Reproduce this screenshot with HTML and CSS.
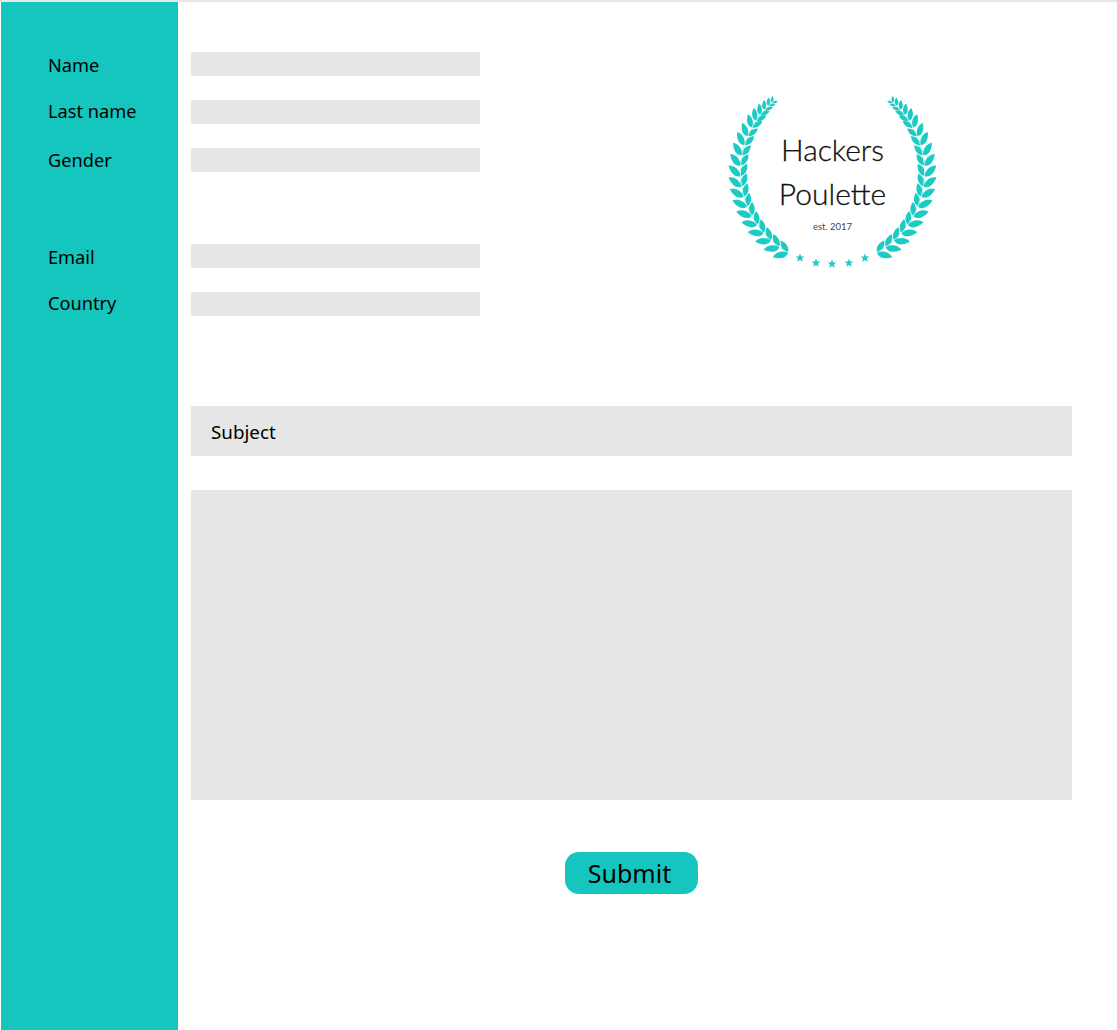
FILE: index.html
```html
<!DOCTYPE html>
<html lang="en">
<head>
<meta charset="utf-8">
<title>Hackers Poulette</title>
<link rel="stylesheet" href="styles.css">
</head>
<body>
<form class="page">
  <aside class="sidebar">
    <label class="side-label side-name" for="name">Name</label>
    <label class="side-label side-last" for="last">Last name</label>
    <label class="side-label side-gender" for="gender">Gender</label>
    <label class="side-label side-email" for="email">Email</label>
    <label class="side-label side-country" for="country">Country</label>
  </aside>
  <main class="content">
    <div class="top-row">
      <div class="fields">
        <input class="field" id="name" type="text">
        <input class="field" id="last" type="text">
        <input class="field" id="gender" type="text">
        <input class="field field-gap" id="email" type="text">
        <input class="field" id="country" type="text">
      </div>
      <svg class="logo" viewBox="0 0 225 195" width="225" height="195" role="img" aria-label="Hackers Poulette logo">
        <defs>
          <g id="pair">
            <path class="leaf" d="M0 0C-2 -5 3 -10 11 -11.5C11 -6 7 -1 0 0Z"/>
            <path class="leaf" d="M0 0C4 -2 10 1 12 7C6 8 1 5 0 0Z"/>
          </g>
          <g id="branch">
            <use href="#pair" transform="rotate(-151 112.5 87) translate(112.5 -5)"/>
            <use href="#pair" transform="rotate(-144.5 112.5 87) translate(112.5 -5)"/>
            <use href="#pair" transform="rotate(-138 112.5 87) translate(112.5 -5)"/>
            <use href="#pair" transform="rotate(-131.5 112.5 87) translate(112.5 -5)"/>
            <use href="#pair" transform="rotate(-125 112.5 87) translate(112.5 -5)"/>
            <use href="#pair" transform="rotate(-118.5 112.5 87) translate(112.5 -5)"/>
            <use href="#pair" transform="rotate(-112 112.5 87) translate(112.5 -5)"/>
            <use href="#pair" transform="rotate(-105.5 112.5 87) translate(112.5 -5)"/>
            <use href="#pair" transform="rotate(-99 112.5 87) translate(112.5 -5)"/>
            <use href="#pair" transform="rotate(-92.5 112.5 87) translate(112.5 -5)"/>
            <use href="#pair" transform="rotate(-86 112.5 87) translate(112.5 -5) scale(.98)"/>
            <use href="#pair" transform="rotate(-79.5 112.5 87) translate(112.5 -5) scale(.96)"/>
            <use href="#pair" transform="rotate(-73 112.5 87) translate(112.5 -5) scale(.94)"/>
            <use href="#pair" transform="rotate(-67 112.5 87) translate(112.5 -5) scale(.9)"/>
            <use href="#pair" transform="rotate(-61 112.5 87) translate(112.5 -5) scale(.86)"/>
            <use href="#pair" transform="rotate(-56 112.5 87) translate(112.5 -5) scale(.8)"/>
            <use href="#pair" transform="rotate(-51.5 112.5 87) translate(112.5 -5) scale(.72)"/>
            <use href="#pair" transform="rotate(-47.5 112.5 87) translate(112.5 -5) scale(.62)"/>
            <use href="#pair" transform="rotate(-44 112.5 87) translate(112.5 -5) scale(.52)"/>
            <use href="#pair" transform="rotate(-41 112.5 87) translate(112.5 -5) scale(.42)"/>
            <path class="stem" d="M67.9 167.5A92 92 0 0 1 54.6 15.5"/>
          </g>
          <polygon id="star" class="leaf" points="0,-4.4 1.2,-1.4 4.3,-1.4 1.9,.6 2.7,3.7 0,1.9 -2.7,3.7 -1.9,.6 -4.3,-1.4 -1.2,-1.4"/>
        </defs>
        <use href="#branch"/>
        <use href="#branch" transform="translate(225 0) scale(-1 1)"/>
        <use href="#star" x="80" y="173"/>
        <use href="#star" x="96" y="178"/>
        <use href="#star" x="112" y="179"/>
        <use href="#star" x="129" y="178"/>
        <use href="#star" x="145" y="173"/>
        <text class="logo-title" x="112.5" y="76">Hackers</text>
        <text class="logo-title" x="112.5" y="120">Poulette</text>
        <text class="logo-est" x="112.5" y="145">est. 2017</text>
      </svg>
    </div>
    <input class="subject" type="text" placeholder="Subject">
    <textarea class="message"></textarea>
    <div class="actions">
      <button class="submit" type="button">Submit</button>
    </div>
  </main>
</form>
</body>
</html>
```
FILE: styles.css
```css
* {
  box-sizing: border-box;
}

html,
body {
  margin: 0;
  background: #fff;
}

body {
  height: 1030px;
  overflow: hidden;
  border-top: 2px solid #e8e8e8;
  font-family: "Noto Sans", "Open Sans", sans-serif;
  color: #000;
}

.page {
  display: flex;
  height: 1028px;
  padding-left: 1px;
}

.sidebar {
  display: flex;
  flex-direction: column;
  flex: 0 0 177px;
  background: #14c6bd;
  padding: 50px 0 0 47px;
}

.side-label {
  display: block;
  height: 26px;
  line-height: 26px;
  font-size: 18.2px;
}

.side-last {
  margin-top: 20px;
}

.side-gender {
  margin-top: 23px;
}

.side-email {
  margin-top: 71px;
}

.side-country {
  margin-top: 20px;
}

.content {
  flex: 1;
  padding: 50px 45px 0 13px;
}

.top-row {
  display: flex;
  height: 354px;
}

.fields {
  display: flex;
  flex-direction: column;
  gap: 24px;
  flex: 0 0 289px;
}

.field {
  display: block;
  width: 289px;
  height: 24px;
  border: 0;
  background: #e6e6e6;
}

.field-gap {
  margin-top: 48px;
}

.logo {
  display: block;
  margin: 33px 0 0 240px;
  flex: none;
}

.leaf {
  fill: #1ccbc3;
}

.stem {
  fill: none;
  stroke: #c4f2ee;
  stroke-width: 1;
}

.logo-title {
  font-family: "Lato", sans-serif;
  font-weight: 300;
  font-size: 30px;
  text-anchor: middle;
  fill: #111;
  stroke: #111;
  stroke-width: 0.3px;
}

.logo-est {
  font-family: "Lato", sans-serif;
  font-size: 9.5px;
  text-anchor: middle;
  fill: #444;
}

.subject {
  display: block;
  width: 881px;
  height: 50px;
  border: 0;
  padding: 2px 20px 0;
  background: #e6e6e6;
  font: 18.8px "Noto Sans", "Open Sans", sans-serif;
  color: #000;
}

.subject::placeholder {
  color: #000;
  opacity: 1;
}

.message {
  display: block;
  width: 881px;
  height: 310px;
  margin-top: 34px;
  border: 0;
  resize: none;
  background: #e6e6e6;
}

.actions {
  display: flex;
  justify-content: center;
  margin-top: 52px;
}

.submit {
  width: 133px;
  height: 42px;
  padding: 0 4px 0 0;
  border: 0;
  border-radius: 14px;
  background: #14c6bd;
  font: 25px "Noto Sans", "Open Sans", sans-serif;
  color: #000;
}
```
